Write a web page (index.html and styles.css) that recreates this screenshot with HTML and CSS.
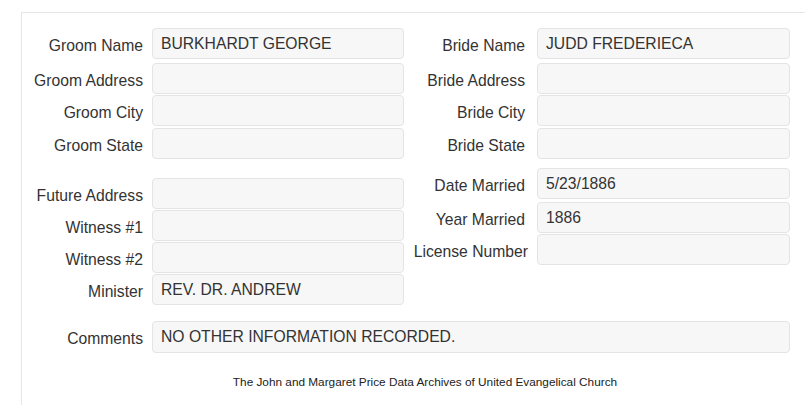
FILE: index.html
```html
<!DOCTYPE html>
<html>
<head>
<meta charset="utf-8">
<link rel="stylesheet" href="styles.css">
</head>
<body>
<div class="panel">
  <div class="section top">
    <div class="col left">
      <div class="row r1"><span class="label">Groom Name</span><div class="field">BURKHARDT GEORGE</div></div>
      <div class="row r2"><span class="label">Groom Address</span><div class="field"></div></div>
      <div class="row r3"><span class="label">Groom City</span><div class="field"></div></div>
      <div class="row"><span class="label">Groom State</span><div class="field"></div></div>
    </div>
    <div class="col right">
      <div class="row r1"><span class="label">Bride Name</span><div class="field">JUDD FREDERIECA</div></div>
      <div class="row r2"><span class="label">Bride Address</span><div class="field"></div></div>
      <div class="row r3"><span class="label">Bride City</span><div class="field"></div></div>
      <div class="row"><span class="label">Bride State</span><div class="field"></div></div>
    </div>
  </div>
  <div class="section mid">
    <div class="col left mid-left">
      <div class="row"><span class="label">Future Address</span><div class="field"></div></div>
      <div class="row g1"><span class="label">Witness #1</span><div class="field"></div></div>
      <div class="row g1"><span class="label">Witness #2</span><div class="field"></div></div>
      <div class="row g1"><span class="label">Minister</span><div class="field">REV. DR. ANDREW</div></div>
    </div>
    <div class="col right mid-right">
      <div class="row"><span class="label">Date Married</span><div class="field">5/23/1886</div></div>
      <div class="row g3"><span class="label">Year Married</span><div class="field">1886</div></div>
      <div class="row g1"><span class="label over">License Number</span><div class="field"></div></div>
    </div>
  </div>
  <div class="row comments"><span class="label">Comments</span><div class="field tall">NO OTHER INFORMATION RECORDED.</div></div>
  <p class="footer">The John and Margaret Price Data Archives of United Evangelical Church</p>
</div>
</body>
</html>
```
FILE: styles.css
```css
html, body {
  margin: 0;
  padding: 0;
  overflow: hidden;
  background: #ffffff;
}
body {
  font-family: "Liberation Sans", Arial, sans-serif;
  color: #333333;
  font-size: 15.7px;
}
.panel {
  margin: 12px 0 0 21px;
  width: 806px;
  height: 377px;
  border-top: 1px solid #e6e6e6;
  border-left: 1px solid #e6e6e6;
  padding-top: 15px;
}
.section {
  display: flex;
  align-items: flex-start;
}
.col {
  display: flex;
  flex-direction: column;
}
.row {
  display: grid;
  align-items: center;
  height: 31px;
}
.left .row {
  grid-template-columns: 121px 252px;
  column-gap: 9px;
}
.right .row {
  grid-template-columns: 121px 253px;
  column-gap: 12px;
}
.left {
  width: 382px;
}
.r1 { margin-bottom: 4px; }
.r2 { margin-bottom: 1px; }
.r3 { margin-bottom: 2px; }
.g1 { margin-top: 1px; }
.g3 { margin-top: 3px; }
.mid-left { margin-top: 19px; }
.mid-right { margin-top: 9px; }
.label {
  text-align: right;
  white-space: nowrap;
  padding-top: 4px;
  line-height: 18px;
}
.label.over {
  margin-right: -3px;
}
.field {
  box-sizing: border-box;
  height: 31px;
  background: #f7f7f7;
  border: 1px solid #e4e4e4;
  border-radius: 4px;
  padding: 0 8px;
  line-height: 29px;
  white-space: nowrap;
  color: #333333;
}
.comments {
  grid-template-columns: 121px 638px;
  column-gap: 9px;
  margin-top: 16px;
  height: 32px;
}
.field.tall {
  height: 32px;
  line-height: 30px;
}
.footer {
  margin: 21px 0 0 0;
  font-size: 11.8px;
  line-height: 16px;
  text-align: center;
  color: #222222;
}
```
